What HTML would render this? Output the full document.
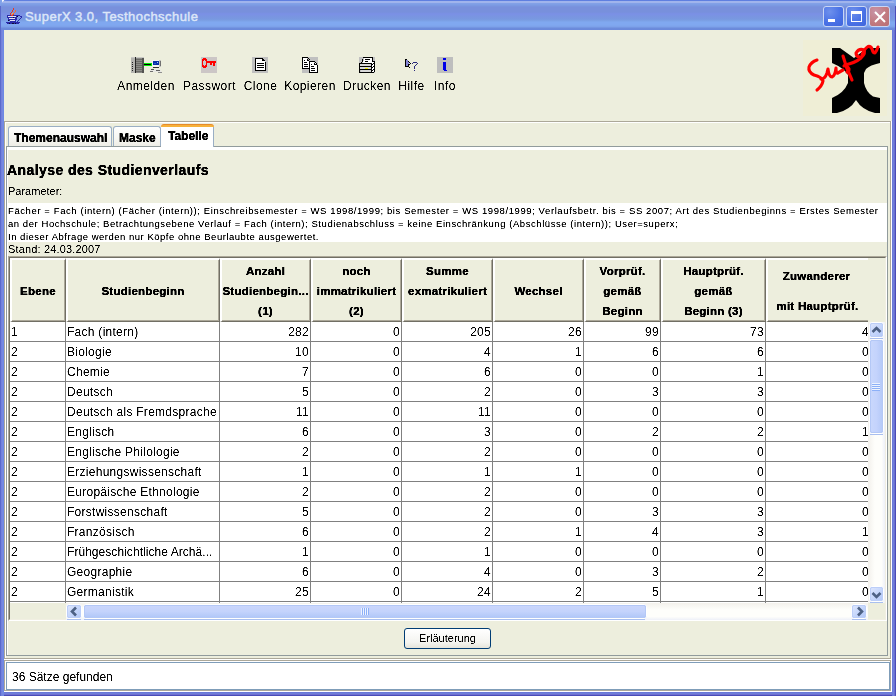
<!DOCTYPE html><html><head><meta charset="utf-8"><title>SuperX</title><style>
*{margin:0;padding:0;box-sizing:border-box}
html,body{width:896px;height:696px;overflow:hidden;background:#EDEEDD;font-family:"Liberation Sans",sans-serif;color:#000}
.a{position:absolute}
#title{left:0;top:0;width:896px;height:30px;border-radius:7px 7px 0 0;background:linear-gradient(to bottom,#5F7FE0 0,#5F7FE0 1px,#A0B4EC 1px,#A0B4EC 3px,#84A2E8 3px,#7C9CE4 5px,#7890DC 7px,#7890DC 12px,#7B90E6 14px,#7A94E2 16px,#7898E0 19px,#7CA2E6 21px,#80A8F0 22px,#80A8F0 25px,#7CA0E8 27px,#6C8CDC 28px,#6A88DA 30px)}
#lb{left:0;top:30px;width:4px;height:666px;background:linear-gradient(to right,#5A6ACC 0,#5A6ACC 1px,#7480DC 1px,#7480DC 2px,#7489E0 2px,#7489E0 3px,#6E88E4 3px)}
#rb{left:892px;top:30px;width:4px;height:666px;background:linear-gradient(to right,#6A78D8 0,#6A78D8 1px,#7080DC 1px,#7080DC 2px,#6A70D0 2px,#6A70D0 3px,#4A4CB8 3px)}
#bb{left:4px;top:692px;width:888px;height:4px;background:linear-gradient(to bottom,#6A78D8 0,#6A78D8 1px,#7080D8 1px,#7080D8 2px,#7070D0 2px,#7070D0 3px,#4A4CB8 3px)}
.ttxt{left:25px;top:9px;font-size:13px;font-weight:normal;-webkit-text-stroke:0.45px #DCE6F8;color:#DCE6F8;white-space:nowrap;letter-spacing:0.45px}
.tbtn{top:6px;width:21px;height:21px;border:1px solid #C9D6F5;border-radius:3px;background:radial-gradient(circle at 30% 25%,#6E90EC,#4A72E6 55%,#3F65DC)}
.tbtn.x{background:radial-gradient(circle at 30% 25%,#C894A8,#C27A80 55%,#B86D74)}
.tb{filter:url(#cr);font-size:12px;white-space:nowrap;top:79px;text-align:center;letter-spacing:0.45px}
.tabtxt{filter:url(#crb);font-size:12px;font-weight:bold;white-space:nowrap}
.cell{filter:url(#cr);position:absolute;height:19px;font-size:12px;line-height:19px;white-space:nowrap;overflow:hidden;letter-spacing:0.27px}
.hd{filter:url(#crb);position:absolute;font-size:11.5px;font-weight:bold;white-space:nowrap;text-align:center;letter-spacing:0.25px}
</style></head><body>
<svg width="0" height="0" style="position:absolute;left:0;top:0"><filter id="cr" x="0" y="0" width="100%" height="100%" color-interpolation-filters="sRGB"><feComponentTransfer><feFuncA type="linear" slope="2.2" intercept="-0.55"/></feComponentTransfer></filter><filter id="cr5" x="0" y="0" width="100%" height="100%" color-interpolation-filters="sRGB"><feComponentTransfer><feFuncA type="linear" slope="1.5" intercept="-0.12"/></feComponentTransfer></filter><filter id="crb" x="0" y="0" width="100%" height="100%" color-interpolation-filters="sRGB"><feComponentTransfer><feFuncA type="linear" slope="2" intercept="0"/></feComponentTransfer></filter></svg>
<div class="a" style="left:0;top:0;width:10px;height:10px;background:#80A2EA"></div><div class="a" style="left:2px;top:0;width:2px;height:2px;background:#F4F8FE"></div>
<div class="a" style="left:886px;top:0;width:10px;height:10px;background:#86A6EC"></div>
<div id="title" class="a"></div>
<svg class="a" style="left:0;top:0" width="30" height="30" shape-rendering="crispEdges"><rect x="7" y="15" width="10" height="1" fill="#2A2AA8"/><rect x="7" y="16" width="1" height="1" fill="#2A2AA8"/><rect x="16" y="16" width="1" height="1" fill="#2A2AA8"/><rect x="7" y="17" width="10" height="1" fill="#2A2AA8"/><rect x="8" y="18" width="1" height="1" fill="#2A2AA8"/><rect x="15" y="18" width="2" height="1" fill="#2A2AA8"/><rect x="8" y="19" width="9" height="1" fill="#2A2AA8"/><rect x="9" y="20" width="1" height="1" fill="#2A2AA8"/><rect x="15" y="20" width="1" height="1" fill="#2A2AA8"/><rect x="10" y="21" width="6" height="1" fill="#2A2AA8"/><rect x="6" y="22" width="14" height="1" fill="#2A2AA8"/><rect x="7" y="23" width="12" height="1" fill="#2A2AA8"/><rect x="17" y="15" width="3" height="1" fill="#2A2AA8"/><rect x="20" y="16" width="2" height="1" fill="#2A2AA8"/><rect x="21" y="17" width="1" height="1" fill="#2A2AA8"/><rect x="20" y="18" width="1" height="1" fill="#2A2AA8"/><rect x="19" y="19" width="1" height="1" fill="#2A2AA8"/><rect x="18" y="20" width="1" height="1" fill="#2A2AA8"/><rect x="17" y="21" width="1" height="1" fill="#2A2AA8"/><rect x="8" y="16" width="8" height="1" fill="#E4E4F4"/><rect x="9" y="18" width="6" height="1" fill="#E4E4F4"/><rect x="10" y="20" width="5" height="1" fill="#E4E4F4"/><rect x="8" y="20" width="1" height="1" fill="#101030"/><rect x="13" y="17" width="1" height="1" fill="#101030"/><rect x="17" y="16" width="1" height="1" fill="#101030"/><rect x="9" y="23" width="1" height="1" fill="#101030"/><rect x="12" y="23" width="2" height="1" fill="#101030"/><rect x="15" y="23" width="1" height="1" fill="#101030"/><rect x="13" y="8" width="1" height="2" fill="#E83A20"/><rect x="12" y="10" width="1" height="2" fill="#E83A20"/><rect x="11" y="12" width="1" height="1" fill="#E83A20"/><rect x="10" y="13" width="1" height="2" fill="#E83A20"/><rect x="11" y="15" width="2" height="1" fill="#E83A20"/><rect x="14" y="12" width="1" height="1" fill="#E83A20"/><rect x="13" y="14" width="1" height="1" fill="#E83A20"/><rect x="15" y="10" width="1" height="2" fill="#F07030"/><rect x="14" y="12" width="1" height="1" fill="#F07030"/><rect x="13" y="13" width="1" height="1" fill="#F07030"/><rect x="12" y="14" width="1" height="1" fill="#F07030"/><rect x="12" y="13" width="1" height="1" fill="#F8C040"/></svg>
<div class="a ttxt">SuperX 3.0, Testhochschule</div>
<div class="a tbtn" style="left:823px"><div class="a" style="left:4px;top:12px;width:7px;height:3px;background:#fff"></div></div>
<div class="a tbtn" style="left:846px"><div class="a" style="left:4px;top:4px;width:11px;height:11px;border:1px solid #fff;border-top-width:3px"></div></div>
<div class="a tbtn x" style="left:869px"><svg class="a" style="left:4px;top:4px" width="12" height="12" viewBox="0 0 12 12"><path d="M1 1 L11 11 M11 1 L1 11" stroke="#fff" stroke-width="2"/></svg></div>
<div class="a" style="left:0;top:6px;width:1px;height:24px;background:#5A6ACC"></div><div class="a" style="left:895px;top:6px;width:1px;height:24px;background:#4A4CB8"></div>
<div id="lb" class="a"></div><div id="rb" class="a"></div><div id="bb" class="a"></div>
<div class="a tb" style="left:106px;width:80px">Anmelden</div>
<div class="a tb" style="left:169.5px;width:80px">Passwort</div>
<div class="a tb" style="left:220.5px;width:80px">Clone</div>
<div class="a tb" style="left:270px;width:80px">Kopieren</div>
<div class="a tb" style="left:327px;width:80px">Drucken</div>
<div class="a tb" style="left:371.5px;width:80px">Hilfe</div>
<div class="a tb" style="left:405px;width:80px">Info</div>
<svg class="a" style="left:130px;top:56px" width="34" height="18" viewBox="130 56 34 18" shape-rendering="crispEdges">
<rect x="131" y="57" width="4" height="16" fill="#B4B4B0"/>
<rect x="131" y="57" width="13" height="1" fill="#C8C8C4"/>
<rect x="135" y="57" width="1" height="16" fill="#262626"/>
<rect x="136" y="58" width="6" height="15" fill="#8C8C88"/>
<rect x="142" y="58" width="2" height="15" fill="#545452"/>
<g fill="#6A6A66"><rect x="136" y="59" width="6" height="1"/><rect x="136" y="61" width="6" height="1"/><rect x="136" y="63" width="6" height="1"/><rect x="136" y="65" width="6" height="1"/><rect x="136" y="67" width="6" height="1"/><rect x="136" y="69" width="6" height="1"/><rect x="136" y="71" width="6" height="1"/></g>
<g fill="#202020"><rect x="132" y="62" width="1" height="1"/><rect x="132" y="64" width="1" height="1"/><rect x="132" y="66" width="1" height="1"/><rect x="132" y="68" width="1" height="1"/><rect x="132" y="70" width="1" height="1"/></g>
<rect x="144" y="63" width="8" height="3" fill="#00F000"/><rect x="144" y="64" width="7" height="1" fill="#000"/>
<rect x="152" y="60" width="9" height="7" fill="#F4F4F0"/>
<rect x="153" y="61" width="6" height="4" fill="#0A30A8"/><rect x="157" y="62" width="1" height="1" fill="#A8D0F8"/><rect x="154" y="63" width="2" height="1" fill="#2A58D0"/>
<rect x="159" y="60" width="2" height="7" fill="#C4C4C0"/><rect x="160" y="61" width="1" height="5" fill="#707070"/>
<rect x="153" y="67" width="6" height="1" fill="#303030"/>
<path d="M151 69 H160 L162 72 H149 Z" fill="#E8E8E4" shape-rendering="auto"/>
<rect x="151" y="69" width="3" height="1" fill="#505050"/><rect x="156" y="70" width="4" height="1" fill="#606060"/><rect x="150" y="71" width="3" height="1" fill="#707070"/><rect x="158" y="72" width="4" height="1" fill="#909090"/>
</svg>
<svg class="a" style="left:0;top:0" width="896" height="120" shape-rendering="crispEdges"><rect x="201" y="57" width="16" height="16" fill="#CCC6C6"/><rect x="203" y="58" width="3" height="1" fill="#FF0000"/><rect x="202" y="59" width="5" height="1" fill="#FF0000"/><rect x="202" y="60" width="1" height="6" fill="#FF0000"/><rect x="206" y="60" width="1" height="6" fill="#FF0000"/><rect x="203" y="60" width="1" height="1" fill="#FF0000"/><rect x="205" y="60" width="1" height="1" fill="#FF0000"/><rect x="203" y="65" width="1" height="1" fill="#FF0000"/><rect x="205" y="65" width="1" height="1" fill="#FF0000"/><rect x="202" y="66" width="5" height="1" fill="#FF0000"/><rect x="203" y="67" width="3" height="1" fill="#FF0000"/><rect x="207" y="61" width="9" height="2" fill="#FF0000"/><rect x="210" y="63" width="2" height="2" fill="#FF0000"/><rect x="213" y="63" width="2" height="3" fill="#FF0000"/></svg>
<svg class="a" style="left:0;top:0" width="896" height="120" shape-rendering="crispEdges"><rect x="252" y="57" width="16" height="16" fill="#C0C0C0"/><rect x="255" y="58" width="7" height="1" fill="#000"/><rect x="255" y="58" width="1" height="13" fill="#000"/><rect x="255" y="70" width="11" height="1" fill="#000"/><rect x="265" y="62" width="1" height="9" fill="#000"/><rect x="262" y="58" width="1" height="3" fill="#000"/><rect x="262" y="60" width="3" height="1" fill="#000"/><rect x="264" y="61" width="1" height="1" fill="#000"/><rect x="263" y="59" width="1" height="1" fill="#000"/><rect x="256" y="59" width="6" height="11" fill="#FFFFFF"/><rect x="262" y="61" width="2" height="1" fill="#FFFFFF"/><rect x="256" y="61" width="9" height="9" fill="#FFFFFF"/><rect x="257" y="63" width="7" height="1" fill="#000"/><rect x="257" y="65" width="7" height="1" fill="#000"/><rect x="257" y="67" width="7" height="1" fill="#000"/></svg>
<svg class="a" style="left:0;top:0" width="896" height="120" shape-rendering="crispEdges"><rect x="302" y="57" width="16" height="16" fill="#C0C0C0"/><rect x="303" y="58" width="4" height="10" fill="#FFFFFF"/><rect x="307" y="61" width="2" height="7" fill="#FFFFFF"/><rect x="308" y="60" width="1" height="1" fill="#FFFFFF"/><rect x="302" y="57" width="5" height="1" fill="#000"/><rect x="302" y="57" width="1" height="12" fill="#000"/><rect x="302" y="68" width="7" height="1" fill="#000"/><rect x="307" y="57" width="1" height="1" fill="#000"/><rect x="308" y="58" width="1" height="1" fill="#000"/><rect x="309" y="59" width="1" height="1" fill="#000"/><rect x="307" y="59" width="1" height="2" fill="#000"/><rect x="308" y="60" width="1" height="1" fill="#000"/><rect x="304" y="60" width="1" height="1" fill="#000"/><rect x="304" y="62" width="3" height="1" fill="#000"/><rect x="304" y="64" width="4" height="1" fill="#000"/><rect x="304" y="66" width="4" height="1" fill="#000"/><rect x="310" y="62" width="4" height="10" fill="#FFFFFF"/><rect x="314" y="64" width="3" height="8" fill="#FFFFFF"/><rect x="315" y="63" width="1" height="1" fill="#FFFFFF"/><rect x="309" y="61" width="5" height="1" fill="#000"/><rect x="309" y="61" width="1" height="12" fill="#000"/><rect x="309" y="72" width="9" height="1" fill="#000"/><rect x="317" y="65" width="1" height="8" fill="#000"/><rect x="314" y="61" width="1" height="1" fill="#000"/><rect x="315" y="62" width="1" height="1" fill="#000"/><rect x="316" y="63" width="1" height="1" fill="#000"/><rect x="314" y="63" width="1" height="2" fill="#000"/><rect x="315" y="64" width="2" height="1" fill="#000"/><rect x="311" y="64" width="1" height="1" fill="#000"/><rect x="311" y="66" width="3" height="1" fill="#000"/><rect x="311" y="68" width="4" height="1" fill="#000"/><rect x="311" y="70" width="4" height="1" fill="#000"/></svg>
<svg class="a" style="left:0;top:0" width="896" height="120" shape-rendering="crispEdges"><rect x="359" y="57" width="16" height="16" fill="#C0C0C0"/><rect x="364" y="58" width="8" height="4" fill="#FFFFFF"/><rect x="363" y="61" width="9" height="2" fill="#FFFFFF"/><rect x="363" y="57" width="10" height="1" fill="#000"/><rect x="363" y="57" width="1" height="1" fill="#000"/><rect x="372" y="57" width="1" height="6" fill="#000"/><rect x="362" y="59" width="1" height="3" fill="#000"/><rect x="361" y="62" width="1" height="1" fill="#000"/><rect x="365" y="59" width="5" height="1" fill="#000"/><rect x="365" y="61" width="3" height="1" fill="#000"/><rect x="360" y="64" width="11" height="2" fill="#D8D8D8"/><rect x="360" y="67" width="11" height="2" fill="#D8D8D8"/><rect x="361" y="70" width="10" height="2" fill="#D8D8D8"/><rect x="359" y="63" width="13" height="1" fill="#000"/><rect x="359" y="63" width="1" height="10" fill="#000"/><rect x="359" y="66" width="13" height="1" fill="#000"/><rect x="359" y="69" width="13" height="1" fill="#000"/><rect x="360" y="72" width="12" height="1" fill="#000"/><rect x="371" y="63" width="1" height="10" fill="#000"/><rect x="365" y="68" width="3" height="1" fill="#F0F000"/><rect x="372" y="62" width="2" height="10" fill="#FFFFFF"/><rect x="374" y="61" width="1" height="11" fill="#000"/><rect x="372" y="61" width="2" height="1" fill="#000"/><rect x="373" y="63" width="1" height="1" fill="#000"/><rect x="372" y="64" width="1" height="1" fill="#000"/><rect x="373" y="66" width="1" height="1" fill="#000"/><rect x="372" y="67" width="1" height="1" fill="#000"/><rect x="373" y="69" width="1" height="1" fill="#000"/><rect x="372" y="70" width="1" height="1" fill="#000"/><rect x="372" y="72" width="2" height="1" fill="#000"/></svg>
<svg class="a" style="left:0;top:0" width="896" height="120" shape-rendering="crispEdges"><rect x="405" y="59" width="1" height="8" fill="#000"/><rect x="406" y="59" width="1" height="1" fill="#000"/><rect x="406" y="66" width="1" height="1" fill="#000"/><rect x="406" y="60" width="2" height="6" fill="#8484D4"/><rect x="408" y="62" width="1" height="2" fill="#8484D4"/><rect x="408" y="61" width="1" height="1" fill="#000"/><rect x="409" y="62" width="1" height="1" fill="#000"/><rect x="410" y="63" width="1" height="1" fill="#000"/><rect x="408" y="64" width="2" height="1" fill="#000"/><rect x="407" y="66" width="1" height="1" fill="#000"/><rect x="408" y="65" width="1" height="2" fill="#000"/><rect x="409" y="67" width="1" height="1" fill="#000"/><rect x="413" y="62" width="4" height="1" fill="#2A2A7A"/><rect x="412" y="63" width="1" height="1" fill="#2A2A7A"/><rect x="417" y="63" width="1" height="1" fill="#2A2A7A"/><rect x="416" y="64" width="1" height="1" fill="#2A2A7A"/><rect x="415" y="65" width="1" height="1" fill="#2A2A7A"/><rect x="414" y="66" width="1" height="3" fill="#2A2A7A"/><rect x="414" y="70" width="1" height="1" fill="#2A2A7A"/></svg>
<svg class="a" style="left:0;top:0" width="896" height="120" shape-rendering="crispEdges"><rect x="437" y="57" width="16" height="16" fill="#BEBEBE"/><rect x="443" y="58" width="3" height="2" fill="#0000E8"/><rect x="443" y="62" width="3" height="8" fill="#0000E8"/><rect x="444" y="70" width="3" height="1" fill="#0000E8"/></svg>
<svg class="a" style="left:803px;top:40px" width="84" height="76" viewBox="803 40 84 76">
<rect x="803" y="40" width="84" height="76" fill="#EFEED6"/>
<path fill="#000" d="M832 48 L840 48 L854 58 L867 48 L880 48 L880 63 Q870 65 866 69 L864 73 L864 83 Q866 92 873 96.5 L880 98 L880 113 L875 113 Q862 110 856 100 Q850 110 837 113 L832 113 L832 98 Q844 93 848 83 L848 75 Q844 68 832 63 Z"/>
<g stroke="#FF0000" stroke-width="3.1" fill="none" stroke-linecap="round" stroke-linejoin="round">
<path d="M817 60 Q811 62 809 67 Q808 72 814 75 Q822 77 823 81 Q822 86 817 90"/>
<path d="M821 79 Q825 79 827 73 L828 69 Q829 77 832 77 Q835 76 836 68 Q836 74 838 73 Q841 71 843 70"/>
<path d="M843 56 Q846 68 852 80"/>
<path d="M844 66 Q847 65 849 69 Q849 73 847 72"/>
<path d="M845 65 Q855 63 861 58 Q866 53 864 50 Q859 48 856 53 Q856 57 860 57"/>
<path d="M862 55 Q864 49 868 46.5 Q871 46 872 49 Q873 53 875 53 Q877 50 878 47"/>
</g>
</svg>
<div class="a" style="left:4px;top:121px;width:887px;height:1px;background:#ACA899"></div>
<div class="a" style="left:4px;top:121px;width:1px;height:538px;background:#ACA899"></div>
<div class="a" style="left:890px;top:121px;width:1px;height:538px;background:#ACA899"></div>
<div class="a" style="left:4px;top:658px;width:887px;height:1px;background:#ACA899"></div>
<div class="a" style="left:5px;top:122px;width:885px;height:1px;background:#fff"></div>
<div class="a" style="left:5px;top:122px;width:1px;height:536px;background:#fff"></div>
<div class="a" style="left:891px;top:121px;width:1px;height:539px;background:#fff"></div>
<div class="a" style="left:4px;top:659px;width:888px;height:1px;background:#fff"></div>
<div class="a" style="left:6px;top:146px;width:882px;height:510px;border:1px solid #919B9C;background:#EDEEDD"></div>
<div class="a" style="left:7px;top:147px;width:880px;height:3px;background:#fff"></div>
<div class="a" style="left:7px;top:147px;width:1px;height:508px;background:#fff"></div>
<div class="a" style="left:8px;top:126px;width:104px;height:20px;border:1px solid #9AAEC4;border-bottom:none;border-radius:3px 3px 0 0;background:linear-gradient(to bottom,#FEFEFE,#F6F6F2 60%,#EEEDE6)"></div>
<div class="a tabtxt" style="left:14px;top:131px">Themenauswahl</div>
<div class="a" style="left:113px;top:126px;width:48px;height:20px;border:1px solid #9AAEC4;border-bottom:none;border-radius:3px 3px 0 0;background:linear-gradient(to bottom,#FEFEFE,#F6F6F2 60%,#EEEDE6)"></div>
<div class="a tabtxt" style="left:119px;top:131px">Maske</div>
<div class="a" style="left:161px;top:124px;width:53px;height:26px;background:#fff;border-radius:3px 3px 0 0"></div>
<div class="a" style="left:213px;top:127px;width:1px;height:20px;background:#9AAEC4"></div>
<div class="a" style="left:161px;top:124px;width:53px;height:3px;background:#F7B23A;border-radius:3px 3px 0 0;border-top:1px solid #E68B2C"></div>
<div class="a tabtxt" style="left:168px;top:129px">Tabelle</div>
<div class="a" style="filter:url(#crb);left:7px;top:162px;font-size:14px;font-weight:bold;letter-spacing:0.42px;white-space:nowrap">Analyse des Studienverlaufs</div>
<div class="a" style="filter:url(#cr);left:8px;top:185px;font-size:11px;white-space:nowrap">Parameter:</div>
<div class="a" style="left:8px;top:203px;width:879px;height:39px;background:#fff"></div>
<div class="a" style="filter:url(#cr5);left:8px;top:204px;font-size:9.5px;line-height:13px;letter-spacing:0.595px;white-space:nowrap">Fächer = Fach (intern) (Fächer (intern)); Einschreibsemester = WS 1998/1999; bis Semester = WS 1998/1999; Verlaufsbetr. bis = SS 2007; Art des Studienbeginns = Erstes Semester</div>
<div class="a" style="filter:url(#cr5);left:8px;top:217px;font-size:9.5px;line-height:13px;letter-spacing:0.555px;white-space:nowrap">an der Hochschule; Betrachtungsebene Verlauf = Fach (intern); Studienabschluss = keine Einschränkung (Abschlüsse (intern)); User=superx;</div>
<div class="a" style="filter:url(#cr5);left:8px;top:230px;font-size:9.5px;line-height:13px;letter-spacing:0.51px;white-space:nowrap">In dieser Abfrage werden nur Köpfe ohne Beurlaubte ausgewertet.</div>
<div class="a" style="filter:url(#cr);left:8px;top:243px;font-size:11px;letter-spacing:0.15px;white-space:nowrap">Stand: 24.03.2007</div>
<div class="a" style="left:8px;top:256px;width:879px;height:365px;border-top:1px solid #ACA899;border-left:1px solid #ACA899;border-right:1px solid #fff;border-bottom:1px solid #fff"></div>
<div class="a" style="left:9px;top:257px;width:877px;height:363px;border-top:1px solid #716F64;border-left:1px solid #716F64;border-right:1px solid #F1EFE2;border-bottom:1px solid #F1EFE2"></div>
<div class="a" style="left:10px;top:258px;width:875px;height:361px;background:#EDEEDD"></div>
<div class="a" style="left:10px;top:258px;width:858px;height:64px;overflow:hidden">
<div class="a" style="left:0px;top:0;width:56px;height:64px;background:#EDEEDD;border-top:2px solid #fff;border-left:2px solid #fff;border-right:1px solid #716F64;border-bottom:1px solid #716F64"></div>
<div class="a" style="left:54px;top:2px;width:1px;height:61px;background:#ACA899"></div>
<div class="a" style="left:2px;top:62px;width:53px;height:1px;background:#ACA899"></div>
<div class="hd" style="left:0px;top:27px;width:56px">Ebene</div>
<div class="a" style="left:56px;top:0;width:154px;height:64px;background:#EDEEDD;border-top:2px solid #fff;border-left:2px solid #fff;border-right:1px solid #716F64;border-bottom:1px solid #716F64"></div>
<div class="a" style="left:208px;top:2px;width:1px;height:61px;background:#ACA899"></div>
<div class="a" style="left:58px;top:62px;width:151px;height:1px;background:#ACA899"></div>
<div class="hd" style="left:56px;top:27px;width:154px">Studienbeginn</div>
<div class="a" style="left:210px;top:0;width:91px;height:64px;background:#EDEEDD;border-top:2px solid #fff;border-left:2px solid #fff;border-right:1px solid #716F64;border-bottom:1px solid #716F64"></div>
<div class="a" style="left:299px;top:2px;width:1px;height:61px;background:#ACA899"></div>
<div class="a" style="left:212px;top:62px;width:88px;height:1px;background:#ACA899"></div>
<div class="hd" style="left:210px;top:7px;width:91px">Anzahl</div>
<div class="hd" style="left:210px;top:27px;width:91px">Studienbegin...</div>
<div class="hd" style="left:210px;top:47px;width:91px">(1)</div>
<div class="a" style="left:301px;top:0;width:91px;height:64px;background:#EDEEDD;border-top:2px solid #fff;border-left:2px solid #fff;border-right:1px solid #716F64;border-bottom:1px solid #716F64"></div>
<div class="a" style="left:390px;top:2px;width:1px;height:61px;background:#ACA899"></div>
<div class="a" style="left:303px;top:62px;width:88px;height:1px;background:#ACA899"></div>
<div class="hd" style="left:301px;top:7px;width:91px">noch</div>
<div class="hd" style="left:301px;top:27px;width:91px">immatrikuliert</div>
<div class="hd" style="left:301px;top:47px;width:91px">(2)</div>
<div class="a" style="left:392px;top:0;width:91px;height:64px;background:#EDEEDD;border-top:2px solid #fff;border-left:2px solid #fff;border-right:1px solid #716F64;border-bottom:1px solid #716F64"></div>
<div class="a" style="left:481px;top:2px;width:1px;height:61px;background:#ACA899"></div>
<div class="a" style="left:394px;top:62px;width:88px;height:1px;background:#ACA899"></div>
<div class="hd" style="left:392px;top:7px;width:91px">Summe</div>
<div class="hd" style="left:392px;top:27px;width:91px">exmatrikuliert</div>
<div class="a" style="left:483px;top:0;width:91px;height:64px;background:#EDEEDD;border-top:2px solid #fff;border-left:2px solid #fff;border-right:1px solid #716F64;border-bottom:1px solid #716F64"></div>
<div class="a" style="left:572px;top:2px;width:1px;height:61px;background:#ACA899"></div>
<div class="a" style="left:485px;top:62px;width:88px;height:1px;background:#ACA899"></div>
<div class="hd" style="left:483px;top:27px;width:91px">Wechsel</div>
<div class="a" style="left:574px;top:0;width:77px;height:64px;background:#EDEEDD;border-top:2px solid #fff;border-left:2px solid #fff;border-right:1px solid #716F64;border-bottom:1px solid #716F64"></div>
<div class="a" style="left:649px;top:2px;width:1px;height:61px;background:#ACA899"></div>
<div class="a" style="left:576px;top:62px;width:74px;height:1px;background:#ACA899"></div>
<div class="hd" style="left:574px;top:7px;width:77px">Vorprüf.</div>
<div class="hd" style="left:574px;top:27px;width:77px">gemäß</div>
<div class="hd" style="left:574px;top:47px;width:77px">Beginn</div>
<div class="a" style="left:651px;top:0;width:105px;height:64px;background:#EDEEDD;border-top:2px solid #fff;border-left:2px solid #fff;border-right:1px solid #716F64;border-bottom:1px solid #716F64"></div>
<div class="a" style="left:754px;top:2px;width:1px;height:61px;background:#ACA899"></div>
<div class="a" style="left:653px;top:62px;width:102px;height:1px;background:#ACA899"></div>
<div class="hd" style="left:651px;top:7px;width:105px">Hauptprüf.</div>
<div class="hd" style="left:651px;top:27px;width:105px">gemäß</div>
<div class="hd" style="left:651px;top:47px;width:105px">Beginn (3)</div>
<div class="a" style="left:756px;top:0;width:105px;height:64px;background:#EDEEDD;border-top:2px solid #fff;border-left:2px solid #fff;border-right:1px solid #716F64;border-bottom:1px solid #716F64"></div>
<div class="a" style="left:859px;top:2px;width:1px;height:61px;background:#ACA899"></div>
<div class="a" style="left:758px;top:62px;width:102px;height:1px;background:#ACA899"></div>
<div class="hd" style="left:754px;top:12px;width:105px">Zuwanderer</div>
<div class="hd" style="left:755px;top:42px;width:105px">mit Hauptprüf.</div>
</div>
<div class="a" style="left:10px;top:322px;width:858px;height:281px;overflow:hidden;background:#fff">
<div class="cell" style="left:1px;top:1px;width:54px">1</div>
<div class="cell" style="left:57px;top:1px;width:152px">Fach (intern)</div>
<div class="cell" style="left:210px;top:1px;width:89px;text-align:right">282</div>
<div class="cell" style="left:301px;top:1px;width:89px;text-align:right">0</div>
<div class="cell" style="left:392px;top:1px;width:89px;text-align:right">205</div>
<div class="cell" style="left:483px;top:1px;width:89px;text-align:right">26</div>
<div class="cell" style="left:574px;top:1px;width:75px;text-align:right">99</div>
<div class="cell" style="left:651px;top:1px;width:103px;text-align:right">73</div>
<div class="cell" style="left:756px;top:1px;width:103px;text-align:right">4</div>
<div class="a" style="left:0;top:19px;width:860px;height:1px;background:#808080"></div>
<div class="cell" style="left:1px;top:21px;width:54px">2</div>
<div class="cell" style="left:57px;top:21px;width:152px">Biologie</div>
<div class="cell" style="left:210px;top:21px;width:89px;text-align:right">10</div>
<div class="cell" style="left:301px;top:21px;width:89px;text-align:right">0</div>
<div class="cell" style="left:392px;top:21px;width:89px;text-align:right">4</div>
<div class="cell" style="left:483px;top:21px;width:89px;text-align:right">1</div>
<div class="cell" style="left:574px;top:21px;width:75px;text-align:right">6</div>
<div class="cell" style="left:651px;top:21px;width:103px;text-align:right">6</div>
<div class="cell" style="left:756px;top:21px;width:103px;text-align:right">0</div>
<div class="a" style="left:0;top:39px;width:860px;height:1px;background:#808080"></div>
<div class="cell" style="left:1px;top:41px;width:54px">2</div>
<div class="cell" style="left:57px;top:41px;width:152px">Chemie</div>
<div class="cell" style="left:210px;top:41px;width:89px;text-align:right">7</div>
<div class="cell" style="left:301px;top:41px;width:89px;text-align:right">0</div>
<div class="cell" style="left:392px;top:41px;width:89px;text-align:right">6</div>
<div class="cell" style="left:483px;top:41px;width:89px;text-align:right">0</div>
<div class="cell" style="left:574px;top:41px;width:75px;text-align:right">0</div>
<div class="cell" style="left:651px;top:41px;width:103px;text-align:right">1</div>
<div class="cell" style="left:756px;top:41px;width:103px;text-align:right">0</div>
<div class="a" style="left:0;top:59px;width:860px;height:1px;background:#808080"></div>
<div class="cell" style="left:1px;top:61px;width:54px">2</div>
<div class="cell" style="left:57px;top:61px;width:152px">Deutsch</div>
<div class="cell" style="left:210px;top:61px;width:89px;text-align:right">5</div>
<div class="cell" style="left:301px;top:61px;width:89px;text-align:right">0</div>
<div class="cell" style="left:392px;top:61px;width:89px;text-align:right">2</div>
<div class="cell" style="left:483px;top:61px;width:89px;text-align:right">0</div>
<div class="cell" style="left:574px;top:61px;width:75px;text-align:right">3</div>
<div class="cell" style="left:651px;top:61px;width:103px;text-align:right">3</div>
<div class="cell" style="left:756px;top:61px;width:103px;text-align:right">0</div>
<div class="a" style="left:0;top:79px;width:860px;height:1px;background:#808080"></div>
<div class="cell" style="left:1px;top:81px;width:54px">2</div>
<div class="cell" style="left:57px;top:81px;width:152px">Deutsch als Fremdsprache</div>
<div class="cell" style="left:210px;top:81px;width:89px;text-align:right">11</div>
<div class="cell" style="left:301px;top:81px;width:89px;text-align:right">0</div>
<div class="cell" style="left:392px;top:81px;width:89px;text-align:right">11</div>
<div class="cell" style="left:483px;top:81px;width:89px;text-align:right">0</div>
<div class="cell" style="left:574px;top:81px;width:75px;text-align:right">0</div>
<div class="cell" style="left:651px;top:81px;width:103px;text-align:right">0</div>
<div class="cell" style="left:756px;top:81px;width:103px;text-align:right">0</div>
<div class="a" style="left:0;top:99px;width:860px;height:1px;background:#808080"></div>
<div class="cell" style="left:1px;top:101px;width:54px">2</div>
<div class="cell" style="left:57px;top:101px;width:152px">Englisch</div>
<div class="cell" style="left:210px;top:101px;width:89px;text-align:right">6</div>
<div class="cell" style="left:301px;top:101px;width:89px;text-align:right">0</div>
<div class="cell" style="left:392px;top:101px;width:89px;text-align:right">3</div>
<div class="cell" style="left:483px;top:101px;width:89px;text-align:right">0</div>
<div class="cell" style="left:574px;top:101px;width:75px;text-align:right">2</div>
<div class="cell" style="left:651px;top:101px;width:103px;text-align:right">2</div>
<div class="cell" style="left:756px;top:101px;width:103px;text-align:right">1</div>
<div class="a" style="left:0;top:119px;width:860px;height:1px;background:#808080"></div>
<div class="cell" style="left:1px;top:121px;width:54px">2</div>
<div class="cell" style="left:57px;top:121px;width:152px">Englische Philologie</div>
<div class="cell" style="left:210px;top:121px;width:89px;text-align:right">2</div>
<div class="cell" style="left:301px;top:121px;width:89px;text-align:right">0</div>
<div class="cell" style="left:392px;top:121px;width:89px;text-align:right">2</div>
<div class="cell" style="left:483px;top:121px;width:89px;text-align:right">0</div>
<div class="cell" style="left:574px;top:121px;width:75px;text-align:right">0</div>
<div class="cell" style="left:651px;top:121px;width:103px;text-align:right">0</div>
<div class="cell" style="left:756px;top:121px;width:103px;text-align:right">0</div>
<div class="a" style="left:0;top:139px;width:860px;height:1px;background:#808080"></div>
<div class="cell" style="left:1px;top:141px;width:54px">2</div>
<div class="cell" style="left:57px;top:141px;width:152px">Erziehungswissenschaft</div>
<div class="cell" style="left:210px;top:141px;width:89px;text-align:right">1</div>
<div class="cell" style="left:301px;top:141px;width:89px;text-align:right">0</div>
<div class="cell" style="left:392px;top:141px;width:89px;text-align:right">1</div>
<div class="cell" style="left:483px;top:141px;width:89px;text-align:right">1</div>
<div class="cell" style="left:574px;top:141px;width:75px;text-align:right">0</div>
<div class="cell" style="left:651px;top:141px;width:103px;text-align:right">0</div>
<div class="cell" style="left:756px;top:141px;width:103px;text-align:right">0</div>
<div class="a" style="left:0;top:159px;width:860px;height:1px;background:#808080"></div>
<div class="cell" style="left:1px;top:161px;width:54px">2</div>
<div class="cell" style="left:57px;top:161px;width:152px">Europäische Ethnologie</div>
<div class="cell" style="left:210px;top:161px;width:89px;text-align:right">2</div>
<div class="cell" style="left:301px;top:161px;width:89px;text-align:right">0</div>
<div class="cell" style="left:392px;top:161px;width:89px;text-align:right">2</div>
<div class="cell" style="left:483px;top:161px;width:89px;text-align:right">0</div>
<div class="cell" style="left:574px;top:161px;width:75px;text-align:right">0</div>
<div class="cell" style="left:651px;top:161px;width:103px;text-align:right">0</div>
<div class="cell" style="left:756px;top:161px;width:103px;text-align:right">0</div>
<div class="a" style="left:0;top:179px;width:860px;height:1px;background:#808080"></div>
<div class="cell" style="left:1px;top:181px;width:54px">2</div>
<div class="cell" style="left:57px;top:181px;width:152px">Forstwissenschaft</div>
<div class="cell" style="left:210px;top:181px;width:89px;text-align:right">5</div>
<div class="cell" style="left:301px;top:181px;width:89px;text-align:right">0</div>
<div class="cell" style="left:392px;top:181px;width:89px;text-align:right">2</div>
<div class="cell" style="left:483px;top:181px;width:89px;text-align:right">0</div>
<div class="cell" style="left:574px;top:181px;width:75px;text-align:right">3</div>
<div class="cell" style="left:651px;top:181px;width:103px;text-align:right">3</div>
<div class="cell" style="left:756px;top:181px;width:103px;text-align:right">0</div>
<div class="a" style="left:0;top:199px;width:860px;height:1px;background:#808080"></div>
<div class="cell" style="left:1px;top:201px;width:54px">2</div>
<div class="cell" style="left:57px;top:201px;width:152px">Französisch</div>
<div class="cell" style="left:210px;top:201px;width:89px;text-align:right">6</div>
<div class="cell" style="left:301px;top:201px;width:89px;text-align:right">0</div>
<div class="cell" style="left:392px;top:201px;width:89px;text-align:right">2</div>
<div class="cell" style="left:483px;top:201px;width:89px;text-align:right">1</div>
<div class="cell" style="left:574px;top:201px;width:75px;text-align:right">4</div>
<div class="cell" style="left:651px;top:201px;width:103px;text-align:right">3</div>
<div class="cell" style="left:756px;top:201px;width:103px;text-align:right">1</div>
<div class="a" style="left:0;top:219px;width:860px;height:1px;background:#808080"></div>
<div class="cell" style="left:1px;top:221px;width:54px">2</div>
<div class="cell" style="left:57px;top:221px;width:152px;letter-spacing:0.05px">Frühgeschichtliche Archä...</div>
<div class="cell" style="left:210px;top:221px;width:89px;text-align:right">1</div>
<div class="cell" style="left:301px;top:221px;width:89px;text-align:right">0</div>
<div class="cell" style="left:392px;top:221px;width:89px;text-align:right">1</div>
<div class="cell" style="left:483px;top:221px;width:89px;text-align:right">0</div>
<div class="cell" style="left:574px;top:221px;width:75px;text-align:right">0</div>
<div class="cell" style="left:651px;top:221px;width:103px;text-align:right">0</div>
<div class="cell" style="left:756px;top:221px;width:103px;text-align:right">0</div>
<div class="a" style="left:0;top:239px;width:860px;height:1px;background:#808080"></div>
<div class="cell" style="left:1px;top:241px;width:54px">2</div>
<div class="cell" style="left:57px;top:241px;width:152px">Geographie</div>
<div class="cell" style="left:210px;top:241px;width:89px;text-align:right">6</div>
<div class="cell" style="left:301px;top:241px;width:89px;text-align:right">0</div>
<div class="cell" style="left:392px;top:241px;width:89px;text-align:right">4</div>
<div class="cell" style="left:483px;top:241px;width:89px;text-align:right">0</div>
<div class="cell" style="left:574px;top:241px;width:75px;text-align:right">3</div>
<div class="cell" style="left:651px;top:241px;width:103px;text-align:right">2</div>
<div class="cell" style="left:756px;top:241px;width:103px;text-align:right">0</div>
<div class="a" style="left:0;top:259px;width:860px;height:1px;background:#808080"></div>
<div class="cell" style="left:1px;top:261px;width:54px">2</div>
<div class="cell" style="left:57px;top:261px;width:152px">Germanistik</div>
<div class="cell" style="left:210px;top:261px;width:89px;text-align:right">25</div>
<div class="cell" style="left:301px;top:261px;width:89px;text-align:right">0</div>
<div class="cell" style="left:392px;top:261px;width:89px;text-align:right">24</div>
<div class="cell" style="left:483px;top:261px;width:89px;text-align:right">2</div>
<div class="cell" style="left:574px;top:261px;width:75px;text-align:right">5</div>
<div class="cell" style="left:651px;top:261px;width:103px;text-align:right">1</div>
<div class="cell" style="left:756px;top:261px;width:103px;text-align:right">0</div>
<div class="a" style="left:0;top:279px;width:860px;height:1px;background:#808080"></div>
<div class="a" style="left:55px;top:0;width:1px;height:281px;background:#808080"></div>
<div class="a" style="left:209px;top:0;width:1px;height:281px;background:#808080"></div>
<div class="a" style="left:300px;top:0;width:1px;height:281px;background:#808080"></div>
<div class="a" style="left:391px;top:0;width:1px;height:281px;background:#808080"></div>
<div class="a" style="left:482px;top:0;width:1px;height:281px;background:#808080"></div>
<div class="a" style="left:573px;top:0;width:1px;height:281px;background:#808080"></div>
<div class="a" style="left:650px;top:0;width:1px;height:281px;background:#808080"></div>
<div class="a" style="left:755px;top:0;width:1px;height:281px;background:#808080"></div>
<div class="a" style="left:860px;top:0;width:1px;height:281px;background:#808080"></div>
</div>
<div class="a" style="left:868px;top:322px;width:17px;height:281px;background:linear-gradient(to right,#F3F1EC,#FEFEFB 40%,#FEFEFB 80%,#EEF0F8)"></div>
<div class="a" style="left:870px;top:338px;width:13px;height:1px;background:#A9BFEF"></div><div class="a" style="left:869px;top:322px;width:15px;height:16px;border:1px solid #FFFFFF;border-radius:3px;background:#B8CBF8"><div class="a" style="left:0;top:0;width:13px;height:14px;border-radius:2px;border:1px solid #BCCEF8;background:linear-gradient(135deg,#DCE5FD 0%,#C8D8FC 45%,#B4C9F8 100%)"></div></div><svg class="a" style="left:0;top:0;overflow:visible" width="1" height="1"><path d="M872.5 332 L876.5 328 L880.5 332" stroke="#4D6185" stroke-width="2.6" fill="none"/></svg>
<div class="a" style="left:870px;top:602px;width:13px;height:1px;background:#A9BFEF"></div><div class="a" style="left:869px;top:586px;width:15px;height:16px;border:1px solid #FFFFFF;border-radius:3px;background:#B8CBF8"><div class="a" style="left:0;top:0;width:13px;height:14px;border-radius:2px;border:1px solid #BCCEF8;background:linear-gradient(135deg,#DCE5FD 0%,#C8D8FC 45%,#B4C9F8 100%)"></div></div><svg class="a" style="left:0;top:0;overflow:visible" width="1" height="1"><path d="M872.5 593 L876.5 597 L880.5 593" stroke="#4D6185" stroke-width="2.6" fill="none"/></svg>
<div class="a" style="left:870px;top:434px;width:13px;height:1px;background:#A9BFEF"></div>
<div class="a" style="left:869px;top:339px;width:15px;height:95px;border:1px solid #FFFFFF;border-radius:3px;background:#B8CBF8"><div class="a" style="left:0;top:0;width:13px;height:93px;border-radius:2px;border:1px solid #B4C8F6;background:linear-gradient(to right,#C9D7FC,#C4D3FC 50%,#B6CAF8)"></div></div>
<div class="a" style="left:872px;top:383px;width:8px;height:8px;background:repeating-linear-gradient(to bottom,#EEF3FE 0,#EEF3FE 1px,#8CB0F8 1px,#8CB0F8 2px)"></div>
<div class="a" style="left:66px;top:603px;width:802px;height:17px;background:linear-gradient(to bottom,#F3F1EC,#FEFEFB 40%,#FEFEFB 80%,#EEF0F8)"></div>
<div class="a" style="left:67px;top:619px;width:14px;height:1px;background:#A9BFEF"></div><div class="a" style="left:66px;top:604px;width:16px;height:15px;border:1px solid #FFFFFF;border-radius:3px;background:#B8CBF8"><div class="a" style="left:0;top:0;width:14px;height:13px;border-radius:2px;border:1px solid #BCCEF8;background:linear-gradient(135deg,#DCE5FD 0%,#C8D8FC 45%,#B4C9F8 100%)"></div></div><svg class="a" style="left:0;top:0;overflow:visible" width="1" height="1"><path d="M76 607.5 L72 611.5 L76 615.5" stroke="#4D6185" stroke-width="2.6" fill="none"/></svg>
<div class="a" style="left:852px;top:619px;width:14px;height:1px;background:#A9BFEF"></div><div class="a" style="left:851px;top:604px;width:16px;height:15px;border:1px solid #FFFFFF;border-radius:3px;background:#B8CBF8"><div class="a" style="left:0;top:0;width:14px;height:13px;border-radius:2px;border:1px solid #BCCEF8;background:linear-gradient(135deg,#DCE5FD 0%,#C8D8FC 45%,#B4C9F8 100%)"></div></div><svg class="a" style="left:0;top:0;overflow:visible" width="1" height="1"><path d="M858 607.5 L862 611.5 L858 615.5" stroke="#4D6185" stroke-width="2.6" fill="none"/></svg>
<div class="a" style="left:84px;top:619px;width:561px;height:1px;background:#A9BFEF"></div>
<div class="a" style="left:83px;top:604px;width:564px;height:15px;border:1px solid #FFFFFF;border-radius:3px;background:#B8CBF8"><div class="a" style="left:0;top:0;width:562px;height:13px;border-radius:2px;border:1px solid #B4C8F6;background:linear-gradient(to bottom,#CAD6FC,#C4D3FC 50%,#B2C8F8)"></div></div>
<div class="a" style="left:361px;top:608px;width:8px;height:7px;background:repeating-linear-gradient(to right,#EEF3FE 0,#EEF3FE 1px,#8CB0F8 1px,#8CB0F8 2px)"></div>
<div class="a" style="left:404px;top:628px;width:87px;height:21px;border:1px solid #003C74;border-radius:3px;background:linear-gradient(to bottom,#FFFFFF,#F4F4F0 70%,#E6E4DA)"></div>
<div class="a" style="filter:url(#cr);left:404px;top:632px;width:87px;text-align:center;font-size:11px;white-space:nowrap">Erläuterung</div>
<div class="a" style="left:4px;top:660px;width:887px;height:1px;background:#ACA899"></div>
<div class="a" style="left:4px;top:660px;width:1px;height:31px;background:#ACA899"></div>
<div class="a" style="left:890px;top:660px;width:1px;height:31px;background:#ACA899"></div>
<div class="a" style="left:4px;top:690px;width:887px;height:1px;background:#ACA899"></div>
<div class="a" style="left:5px;top:661px;width:885px;height:1px;background:#fff"></div>
<div class="a" style="left:5px;top:661px;width:1px;height:29px;background:#fff"></div>
<div class="a" style="left:891px;top:660px;width:1px;height:32px;background:#fff"></div>
<div class="a" style="left:4px;top:691px;width:888px;height:1px;background:#fff"></div>
<div class="a" style="left:6px;top:662px;width:884px;height:28px;border:1px solid #7F9DB9;background:#fff"></div>
<div class="a" style="filter:url(#cr);left:12px;top:670px;font-size:12px;white-space:nowrap">36 Sätze gefunden</div>
</body></html>
